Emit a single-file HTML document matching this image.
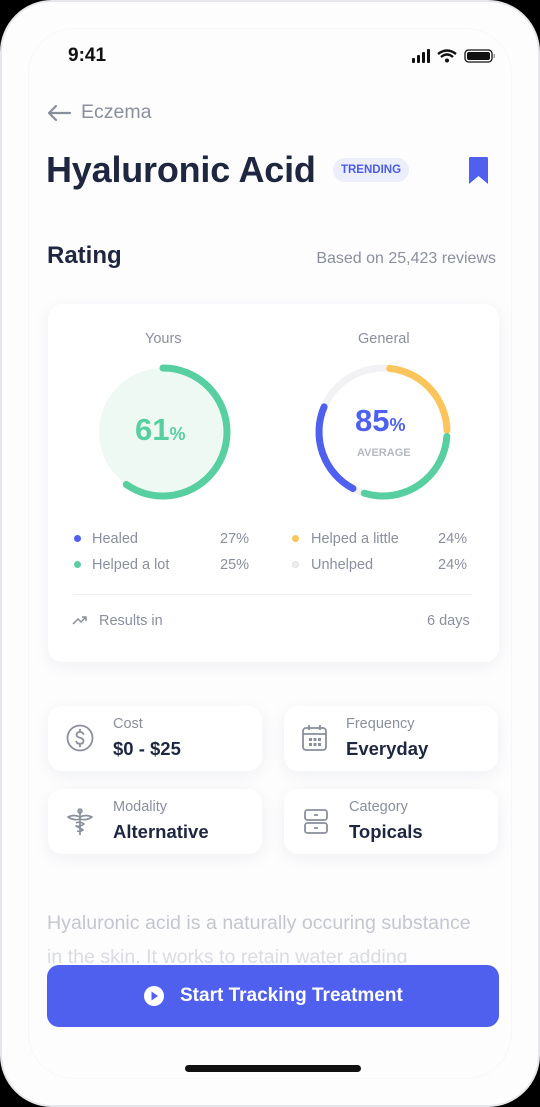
<!DOCTYPE html>
<html><head><meta charset="utf-8"><style>
*{margin:0;padding:0;box-sizing:border-box}
body{width:540px;height:1107px;background:#000;font-family:"Liberation Sans",sans-serif;overflow:hidden;position:relative}
.phone{position:absolute;left:0;top:0;width:540px;height:1107px;background:#fdfdfe;border:2px solid #e6e7ea;border-radius:52px;overflow:hidden}
.inner{position:absolute;left:26px;top:26px;right:26px;bottom:26px;border:1px solid #f6f7f8;border-radius:46px}
.abs{position:absolute}
.card{position:absolute;background:#fff;border-radius:14px;box-shadow:0 4px 18px rgba(20,30,60,.06)}
.lbl{color:#8a8f9c;font-size:14.5px}
.val{color:#1f2740;font-size:18.5px;font-weight:bold}
.leg{position:absolute;font-size:14.5px;color:#8a8f9c}
.dot{position:absolute;width:7px;height:7px;border-radius:50%}
</style></head><body>
<div class="phone">
<div class="inner"></div>
<div class="abs" style="left:66px;top:43px;font-size:19px;font-weight:bold;color:#111">9:41</div>
<svg class="abs" style="left:410px;top:46px" width="90" height="16" viewBox="0 0 90 16">
<rect x="0" y="10" width="3" height="5" rx="1" fill="#111"/><rect x="5" y="7" width="3" height="8" rx="1" fill="#111"/><rect x="10" y="4" width="3" height="11" rx="1" fill="#111"/><rect x="15" y="1" width="3" height="14" rx="1" fill="#111"/>
<path d="M26 6 Q35 -1 44 6" stroke="#111" stroke-width="2.4" fill="none"/><path d="M29 9 Q35 4 41 9" stroke="#111" stroke-width="2.4" fill="none"/><circle cx="35" cy="12.5" r="2" fill="#111"/>
<rect x="53" y="2" width="27" height="12" rx="3.5" fill="none" stroke="#111" stroke-width="1.3"/><rect x="55" y="4" width="23" height="8" rx="2" fill="#111"/><rect x="81.5" y="6" width="1.5" height="4" fill="#999"/>
</svg>
<svg class="abs" style="left:44px;top:101px" width="26" height="20" viewBox="0 0 26 20"><path d="M24 10H3M10 3L3 10L10 17" stroke="#8a8f9c" stroke-width="2.2" fill="none" stroke-linecap="round" stroke-linejoin="round"/></svg>
<div class="abs" style="left:79px;top:99px;font-size:19.5px;color:#8a8f9c">Eczema</div>
<div class="abs" style="left:44px;top:147px;font-size:36px;font-weight:bold;color:#1f2740;letter-spacing:-0.2px">Hyaluronic Acid</div>
<div class="abs" style="left:331px;top:156px;width:76px;height:24px;border-radius:12px;background:#eceefc;color:#4b5ce6;font-size:11.5px;font-weight:bold;text-align:center;line-height:24px">TRENDING</div>
<svg class="abs" style="left:466px;top:154px" width="21" height="29" viewBox="0 0 21 29"><path d="M2 1H19Q20 1 20 3V28L10.5 20L1 28V3Q1 1 2 1Z" fill="#4f60ef"/></svg>
<div class="abs" style="left:45px;top:240px;font-size:24px;font-weight:bold;color:#1f2740">Rating</div>
<div class="abs" style="right:42px;top:248px;font-size:16px;color:#8a8f9c">Based on 25,423 reviews</div>

<div class="card" style="left:46px;top:302px;width:451px;height:358px"></div>
<div class="abs" style="left:143px;top:329px;font-size:14.5px;color:#8a8f9c">Yours</div>
<div class="abs" style="left:356px;top:329px;font-size:14.5px;color:#8a8f9c">General</div>
<svg class="abs" style="left:0;top:0" width="540" height="600">
<circle cx="161" cy="430" r="64" fill="#eef9f4"/>
<circle cx="161" cy="430" r="64" fill="none" stroke="#58cfa0" stroke-width="7" stroke-linecap="round" stroke-dasharray="240 402" transform="rotate(-90 161 430)"/>
<circle cx="381" cy="430" r="64" fill="none" stroke="#f2f2f4" stroke-width="7"/>
<circle cx="381" cy="430" r="64" fill="none" stroke="#fbc55c" stroke-width="7" stroke-linecap="round" stroke-dasharray="92 402" transform="rotate(-84 381 430)"/>
<circle cx="381" cy="430" r="64" fill="none" stroke="#58cfa0" stroke-width="7" stroke-linecap="round" stroke-dasharray="115 402" transform="rotate(4 381 430)"/>
<circle cx="381" cy="430" r="64" fill="none" stroke="#4f60ef" stroke-width="7" stroke-linecap="round" stroke-dasharray="95 402" transform="rotate(118 381 430)"/>
</svg>
<div class="abs" style="left:133px;top:410px;font-size:31px;font-weight:bold;color:#58cfa0">61<span style="font-size:18px">%</span></div>
<div class="abs" style="left:353px;top:401px;font-size:31px;font-weight:bold;color:#4f60ef">85<span style="font-size:18px">%</span></div>
<div class="abs" style="left:355px;top:445px;font-size:11px;font-weight:bold;color:#b5b8c0">AVERAGE</div>
<div class="dot" style="left:72px;top:533px;background:#4f60ef"></div>
<div class="leg" style="left:90px;top:529px">Healed</div><div class="leg" style="left:218px;top:529px">27%</div>
<div class="dot" style="left:72px;top:559px;background:#58cfa0"></div>
<div class="leg" style="left:90px;top:555px">Helped a lot</div><div class="leg" style="left:218px;top:555px">25%</div>
<div class="dot" style="left:290px;top:533px;background:#fbc55c"></div>
<div class="leg" style="left:309px;top:529px">Helped a little</div><div class="leg" style="left:436px;top:529px">24%</div>
<div class="dot" style="left:290px;top:559px;background:#eee;border:1px solid #e2e2e5"></div>
<div class="leg" style="left:309px;top:555px">Unhelped</div><div class="leg" style="left:436px;top:555px">24%</div>
<div class="abs" style="left:71px;top:592px;width:399px;height:1px;background:#eceef1"></div>
<svg class="abs" style="left:70px;top:612px" width="16" height="12" viewBox="0 0 16 12"><path d="M1 10L6 5L9 8L14 3M10 3H14V7" stroke="#8a8f9c" stroke-width="1.5" fill="none"/></svg>
<div class="leg" style="left:97px;top:611px">Results in</div>
<div class="leg" style="left:425px;top:611px">6 days</div>

<div class="card" style="left:46px;top:704px;width:214px;height:65px"></div>
<div class="card" style="left:282px;top:704px;width:214px;height:65px"></div>
<div class="card" style="left:46px;top:787px;width:214px;height:65px"></div>
<div class="card" style="left:282px;top:787px;width:214px;height:65px"></div>
<svg class="abs" style="left:64px;top:722px" width="28" height="28" viewBox="0 0 28 28"><circle cx="14" cy="14" r="12.5" fill="none" stroke="#8a8f9c" stroke-width="1.8"/><path d="M17.5 10Q16.5 8 14 8Q10.5 8 10.5 10.8Q10.5 13 14 13.8Q17.5 14.6 17.5 17Q17.5 19.8 14 19.8Q11.3 19.8 10.3 17.8M14 5.5V8M14 19.8V22.5" stroke="#8a8f9c" stroke-width="1.8" fill="none" stroke-linecap="round"/></svg>
<div class="abs lbl" style="left:111px;top:714px">Cost</div><div class="abs val" style="left:111px;top:736px">$0 - $25</div>
<svg class="abs" style="left:299px;top:721px" width="28" height="30" viewBox="0 0 28 30"><rect x="2" y="5" width="23" height="22" rx="3" fill="none" stroke="#8a8f9c" stroke-width="1.8"/><path d="M2 11H25M8 2V7M19 2V7" stroke="#8a8f9c" stroke-width="1.8"/><g fill="#8a8f9c"><rect x="8" y="15" width="3" height="3"/><rect x="12.5" y="15" width="3" height="3"/><rect x="17" y="15" width="3" height="3"/><rect x="8" y="20" width="3" height="3"/><rect x="12.5" y="20" width="3" height="3"/><rect x="17" y="20" width="3" height="3"/></g></svg>
<div class="abs lbl" style="left:344px;top:714px">Frequency</div><div class="abs val" style="left:344px;top:736px">Everyday</div>
<svg class="abs" style="left:64px;top:805px" width="28" height="30" viewBox="0 0 28 30"><path d="M14 3V28M2 10Q8 7 14 10Q20 7 26 10Q20 14 14 12Q8 14 2 10ZM10 16Q14 14 18 17Q14 20 10 19Q14 21 17 23Q14 25 11 24" stroke="#8a8f9c" stroke-width="1.7" fill="none" stroke-linejoin="round"/><circle cx="14" cy="4" r="2" fill="none" stroke="#8a8f9c" stroke-width="1.5"/></svg>
<div class="abs lbl" style="left:111px;top:797px">Modality</div><div class="abs val" style="left:111px;top:819px">Alternative</div>
<svg class="abs" style="left:301px;top:806px" width="26" height="28" viewBox="0 0 26 28"><rect x="2" y="2" width="22" height="10" rx="2.5" fill="none" stroke="#8a8f9c" stroke-width="1.8"/><rect x="2" y="15" width="22" height="10" rx="2.5" fill="none" stroke="#8a8f9c" stroke-width="1.8"/><path d="M11 7H15M11 20H15" stroke="#8a8f9c" stroke-width="1.8"/></svg>
<div class="abs lbl" style="left:347px;top:797px">Category</div><div class="abs val" style="left:347px;top:819px">Topicals</div>

<div class="abs" style="left:45px;top:910px;font-size:19.6px;color:#c4c7cf;white-space:nowrap">Hyaluronic acid is a naturally occuring substance</div>
<div class="abs" style="left:45px;top:944px;font-size:19.6px;color:#dadce2;white-space:nowrap;height:17px;overflow:hidden">in the skin. It works to retain water adding</div>
<div class="abs" style="left:45px;top:963px;width:452px;height:62px;border-radius:12px;background:#4f60ef"></div>
<svg class="abs" style="left:141px;top:983px" width="22" height="22" viewBox="0 0 22 22"><circle cx="11" cy="11" r="10" fill="#fff"/><path d="M8.5 6.5L15 11L8.5 15.5Z" fill="#4f60ef"/></svg>
<div class="abs" style="left:178px;top:983px;font-size:19px;font-weight:bold;color:#fff">Start Tracking Treatment</div>
<div class="abs" style="left:183px;top:1063px;width:176px;height:7px;border-radius:4px;background:#111"></div>
</div>
</body></html>
